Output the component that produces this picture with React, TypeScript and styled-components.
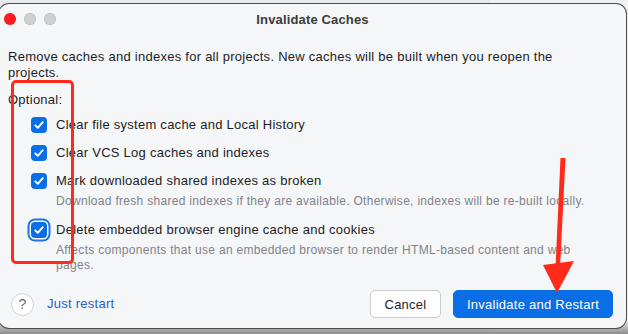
import React from "react";
import styled, { createGlobalStyle } from "styled-components";

const GlobalStyle = createGlobalStyle`
  html, body {
    margin: 0;
    padding: 0;
  }
  body {
    width: 628px;
    height: 334px;
    overflow: hidden;
    background: linear-gradient(to right, #e9e9e9 0, #e9e9e9 490px, #f1f1f1 490px);
    font-family: "Liberation Sans", Arial, sans-serif;
    color: #1d1d1f;
  }
`;

const Stage = styled.div`
  position: relative;
  width: 628px;
  height: 334px;
  padding-top: 4px;
  box-sizing: border-box;
  background: linear-gradient(to bottom, transparent 320px, #8c8c8c 334px);
`;

const Window = styled.div`
  margin-left: -1px;
  width: 627px;
  height: 324px;
  box-sizing: border-box;
  background: #f5f6f8;
  border-radius: 10px;
  box-shadow: 0 0 0 1px #4d4d4d;
  display: flex;
  flex-direction: column;
`;

const TitleBar = styled.div`
  height: 30px;
  display: grid;
  grid-template-columns: 1fr auto 1fr;
  align-items: center;
  padding-left: 5px;
`;

const Lights = styled.div`
  display: flex;
  gap: 8px;
`;

const Light = styled.span<{ $color: string }>`
  width: 12px;
  height: 12px;
  border-radius: 50%;
  background: ${(p) => p.$color};
  box-shadow: inset 0 0 0 0.5px rgba(0, 0, 0, 0.15);
`;

const Title = styled.div`
  font-size: 13px;
  font-weight: 700;
  letter-spacing: 0.15px;
  color: #3b3b3b;
  padding-right: 5px;
`;

const Body = styled.div`
  flex: 1;
  padding: 15px 13px 0 9px;
  display: flex;
  flex-direction: column;
  font-size: 13px;
  line-height: 16px;
  letter-spacing: 0.26px;
`;

const Intro = styled.p`
  margin: 0;
  width: 560px;
`;

const SectionLabel = styled.div`
  margin-top: 11px;
`;

const Options = styled.div`
  display: flex;
  flex-direction: column;
  padding-left: 23px;
  margin-top: 9px;
  gap: 12px;
`;

const Option = styled.div`
  display: grid;
  grid-template-columns: 16px 1fr;
  column-gap: 9px;
  align-items: center;
`;

const Box = styled.span<{ $focused?: boolean }>`
  width: 16px;
  height: 16px;
  border-radius: 4px;
  background: #0a6ee6;
  display: flex;
  align-items: center;
  justify-content: center;
  box-shadow: ${(p) =>
    p.$focused ? "0 0 0 1.5px #ffffff, 0 0 0 3.5px #1a73e8" : "none"};
`;

const Label = styled.span`
  color: #1d1d1f;
`;

const Hint = styled.span`
  grid-column: 2;
  max-width: 540px;
  margin-top: 5px;
  margin-bottom: 1px;
  font-size: 12px;
  line-height: 15px;
  letter-spacing: 0.3px;
  color: #7f828a;
`;

const Footer = styled.div`
  margin-top: auto;
  height: 28px;
  margin-bottom: 10px;
  display: flex;
  align-items: center;
  padding-left: 3px;
`;

const Help = styled.span`
  width: 21px;
  height: 21px;
  border-radius: 50%;
  background: #ffffff;
  border: 1px solid #cfd1d5;
  color: #6b6b6b;
  font-size: 14px;
  letter-spacing: 0;
  display: flex;
  align-items: center;
  justify-content: center;
`;

const Link = styled.span`
  margin-left: 13px;
  color: #2563c4;
`;

const Spacer = styled.div`
  flex: 1;
`;

const Button = styled.button<{ $primary?: boolean }>`
  height: 28px;
  box-sizing: border-box;
  border-radius: 5px;
  font-family: inherit;
  font-size: 13px;
  letter-spacing: 0.26px;
  padding: 0;
  margin-left: 12px;
  width: ${(p) => (p.$primary ? "160px" : "71px")};
  background: ${(p) => (p.$primary ? "#0a6ee6" : "#ffffff")};
  color: ${(p) => (p.$primary ? "#ffffff" : "#1d1d1f")};
  border: 1px solid ${(p) => (p.$primary ? "#0a6ee6" : "#c9cbd0")};
`;

const RedFrame = styled.div`
  position: absolute;
  left: 11px;
  top: 80px;
  width: 63px;
  height: 184px;
  box-sizing: border-box;
  border: 3px solid #ff2a1a;
  border-radius: 5px;
`;

const Arrow = styled.svg`
  position: absolute;
  left: 0;
  top: 0;
  pointer-events: none;
`;

function Check() {
  return (
    <svg width="12" height="12" viewBox="0 0 12 12">
      <path
        d="M2.3 6.3 L4.8 8.8 L9.8 3.2"
        fill="none"
        stroke="#fff"
        strokeWidth="1.9"
        strokeLinecap="round"
        strokeLinejoin="round"
      />
    </svg>
  );
}

export default function App() {
  return (
    <>
      <GlobalStyle />
      <Stage>
        <Window>
          <TitleBar>
            <Lights>
              <Light $color="#fe1c1c" />
              <Light $color="#cfcfcf" />
              <Light $color="#cfcfcf" />
            </Lights>
            <Title>Invalidate Caches</Title>
            <div />
          </TitleBar>
          <Body>
            <Intro>
              Remove caches and indexes for all projects. New caches will be
              built when you reopen the projects.
            </Intro>
            <SectionLabel>Optional:</SectionLabel>
            <Options>
              <Option>
                <Box>
                  <Check />
                </Box>
                <Label>Clear file system cache and Local History</Label>
              </Option>
              <Option>
                <Box>
                  <Check />
                </Box>
                <Label>Clear VCS Log caches and indexes</Label>
              </Option>
              <Option>
                <Box>
                  <Check />
                </Box>
                <Label>Mark downloaded shared indexes as broken</Label>
                <Hint>
                  Download fresh shared indexes if they are available.
                  Otherwise, indexes will be re-built locally.
                </Hint>
              </Option>
              <Option>
                <Box $focused>
                  <Check />
                </Box>
                <Label>Delete embedded browser engine cache and cookies</Label>
                <Hint>
                  Affects components that use an embedded browser to render
                  HTML-based content and web pages.
                </Hint>
              </Option>
            </Options>
            <Footer>
              <Help>?</Help>
              <Link>Just restart</Link>
              <Spacer />
              <Button>Cancel</Button>
              <Button $primary>Invalidate and Restart</Button>
            </Footer>
          </Body>
        </Window>
        <RedFrame />
        <Arrow width="628" height="334" viewBox="0 0 628 334">
          <path d="M560.5 158 L565.5 158 L560 268 L555.5 268 Z" fill="#ff2a1a" />
          <path d="M543 265 L574 261 L557 293 Z" fill="#ff2a1a" />
        </Arrow>
      </Stage>
    </>
  );
}
